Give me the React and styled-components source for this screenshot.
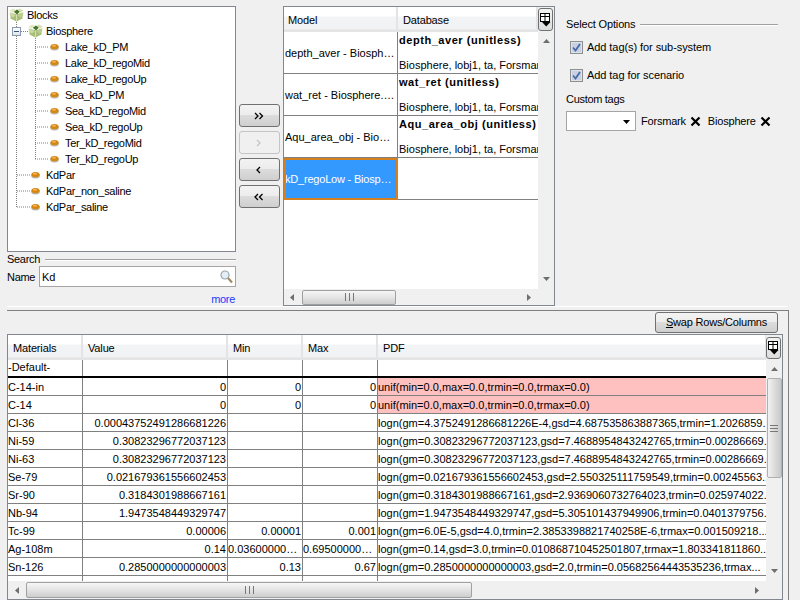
import React from "react";
import styled, { createGlobalStyle } from "styled-components";

const Global = createGlobalStyle`
  html, body { margin: 0; padding: 0; background: #f0f0f0; }
  * { box-sizing: border-box; }
`;

const Page = styled.div`
  width: 800px; height: 600px; overflow: hidden; background: #f0f0f0;
  padding: 6px 0 0 7px;
  font: 11px "Liberation Sans", Arial, sans-serif; color: #000;
`;
const Top = styled.div`display: flex; width: 781px; height: 301px; border-bottom: 1px solid #fff;`;
const LeftCol = styled.div`width: 229px; flex: none; display: flex; flex-direction: column;`;
const Tree = styled.div`
  position: relative; height: 248px; background: #fff; border: 1px solid #828790;
`;
const TreeRow = styled.div`
  height: 16px; display: flex; align-items: center; letter-spacing: -0.3px;
  padding-left: ${p => p.$indent}px; white-space: nowrap;
`;
const TreeIcon = styled.svg`flex: none; margin-right: ${p => p.$gap}px; display: block;`;
const Lines = styled.svg`position: absolute; left: 0; top: 0; pointer-events: none;`;
const MinusBox = styled.span`
  position: absolute; left: 4px; top: 20px; width: 9px; height: 9px;
  border: 1px solid #8a9bb0; background: linear-gradient(#fff, #dfe4ee);
  &::after { content: ""; position: absolute; left: 1px; right: 1px; top: 3px; height: 1px; background: #39547a; }
`;
const TitleRow = styled.div`
  display: flex; align-items: center; gap: ${p => p.$gap}px; height: 13px;
  margin-top: ${p => p.$top}px; width: ${p => p.$w}px; line-height: 13px;
`;
const TitleText = styled.span`letter-spacing: ${p => p.$track}px;`;
const Rule = styled.div`flex: 1; height: 1px; background: #a0a0a0; box-shadow: 0 1px 0 #fff;`;
const NameRow = styled.div`display: flex; align-items: center; height: 21px;`;
const NameLabel = styled.span`width: 32px; flex: none; letter-spacing: -0.3px;`;
const SearchBox = styled.div`
  flex: 1; height: 21px; background: #fff; border: 1px solid #a5a5a5;
  display: flex; align-items: center; justify-content: space-between; padding: 0 2px 0 2px;
`;
const More = styled.div`text-align: right; color: #1a3cff; margin: 5px 1px 0 0; line-height: 14px; letter-spacing: -0.3px;`;

const MoveCol = styled.div`
  width: 41px; margin-left: 3px; padding-top: 98px; flex: none;
  display: flex; flex-direction: column; gap: 4px;
`;
const MoveButton = styled.div`
  height: 23px; border: 1px solid ${p => p.$off ? "#c4c4c4" : "#707070"}; border-radius: 3px;
  background: ${p => p.$off ? "#f0f0f0" : "linear-gradient(#f3f3f3 0, #ececec 48%, #dcdcdc 50%, #cfcfcf 100%)"};
  display: flex; align-items: center; justify-content: center;
`;
const Frame = styled.div`
  position: relative; flex: none; width: ${p => p.$w}px; height: ${p => p.$h}px;
  margin-left: ${p => p.$left}px; border: 1px solid #828790; background: #f0f0f0;
  display: grid; grid-template-columns: 1fr 16px; grid-template-rows: 1fr ${p => p.$bar}px;
  overflow: hidden;
`;
const Body = styled.div`background: #fff; overflow: hidden;`;
const HeadRow = styled.div`
  display: flex; height: 25px;
  background: linear-gradient(#fff 0, #fff 36%, #f3f4f5 40%, #f1f2f3 88%, #e2e2e2 92%, #e6e6e6 100%);
`;
const HeadCell = styled.div`
  width: ${p => p.$w}px; flex: none; padding-left: ${p => p.$pad}px; line-height: 27px;
  border-right: 2px solid #e4e4e6; white-space: nowrap; overflow: hidden; letter-spacing: -0.15px;
`;
const ModelRow = styled.div`display: flex; height: 42px; border-bottom: 1px solid #808080;`;
const ModelCell = styled.div`
  width: 114px; flex: none; padding: 0 2px 0 1px; line-height: 42px;
  border-right: 1px solid #808080; white-space: nowrap; overflow: hidden; text-overflow: ellipsis;
`;
const SelectedCell = styled(ModelCell)`
  height: 42px; line-height: 38px; background: #3399ff; color: #fff; letter-spacing: -0.2px;
  border: 2px solid #d5801f; padding-left: 0; margin-bottom: -1px; text-indent: -1px;
`;
const DbCell = styled.div`
  flex: 1; padding-left: 1px; overflow: hidden; white-space: nowrap; display: flex;
  flex-direction: column; justify-content: space-between;
`;
const DbTitle = styled.div`font-weight: bold; line-height: 15px; padding-top: 1px; letter-spacing: 0.55px;`;
const DbSub = styled.div`line-height: 15px;`;

const VBar = styled.div`position: relative; background: #f0f0f0; display: flex; flex-direction: column; align-items: center; padding: ${p => p.$pad}px 0 8px;`;
const Gap = styled.div`flex: 1;`;
const VThumb = styled.div`
  width: 15px; height: 100px; margin-top: 7px; border: 1px solid #b0b0b0; border-radius: 2px;
  background: linear-gradient(90deg, #f2f2f2, #dcdcdc 50%, #c8c8c8);
  display: flex; align-items: center; justify-content: center;
`;
const HBar = styled.div`display: flex; align-items: center; background: #f0f0f0; padding: 0 7px 0 ${p => p.$left}px;`;
const HThumb = styled.div`
  width: ${p => p.$w}px; height: ${p => p.$h}px; margin-left: ${p => p.$gap}px; border: 1px solid #a0a0a0; border-radius: 2px;
  background: linear-gradient(#f6f6f6, #e4e4e4 50%, #cdcdcd);
  display: flex; align-items: center; justify-content: center;
`;
const Corner = styled.div`background: #f0f0f0;`;
const CornerButton = styled.div`
  position: absolute; right: ${p => p.$r}px; top: ${p => p.$t}px; width: 15px; height: ${p => p.$h}px;
  border: 1px solid #707070; border-radius: 3px; background: linear-gradient(#f3f3f3, #dcdcdc);
  display: flex; align-items: center; justify-content: center;
`;

const Options = styled.div`margin-left: 11px; width: 212px; flex: none; padding-top: 12px;`;
const CheckRow = styled.div`
  display: flex; align-items: center; gap: 4px; height: 14px; margin-left: 4px;
  margin-top: ${p => p.$top}px; letter-spacing: -0.07px;
`;
const CustomLabel = styled.div`line-height: 14px; margin-top: 10px; letter-spacing: -0.3px;`;
const TagRow = styled.div`display: flex; align-items: center; margin-top: 5px; height: 20px;`;
const Combo = styled.div`
  width: 70px; height: 20px; background: #fff; border: 1px solid #a5a5a5;
  display: flex; align-items: center; justify-content: flex-end; padding: 1px 5px 0 0; margin-right: 5px;
`;
const Tag = styled.span`margin-right: ${p => p.$gap}px; letter-spacing: -0.2px;`;
const TagX = styled.svg`display: block; margin-right: ${p => p.$gap}px; flex: none;`;

const Bottom = styled.div`
  margin-top: 3px; width: 782px; height: 300px; border-top: 1px solid #808080;
  border-right: 1px solid #808080; padding-top: 1px;
`;
const SwapRow = styled.div`display: flex; justify-content: flex-end; padding-right: 10px; height: 22px;`;
const SwapButton = styled.div`
  width: 123px; height: 21px; border: 1px solid #707070; border-radius: 3px; text-align: center; line-height: 19px;
  letter-spacing: -0.2px;
  background: linear-gradient(#f3f3f3 0, #ececec 48%, #dcdcdc 50%, #cfcfcf 100%);
`;
const MatRow = styled.div`
  display: flex; height: 18px; background: #fff;
  border-bottom: ${p => p.$strong ? "2px solid #000" : "1px solid #808080"};
`;
const MatCell = styled.div`
  width: ${p => p.$w}px; flex: ${p => p.$grow ? 1 : "none"}; overflow: hidden; white-space: nowrap;
  text-overflow: ${p => p.$clip ? "clip" : "ellipsis"};
  border-right: ${p => p.$grow ? "none" : "1px solid #808080"};
  padding: 0 1px 0 0; line-height: ${p => p.$lead || 18}px; text-align: ${p => p.$right ? "right" : "left"};
  background: ${p => p.$pink ? "#ffc0c0" : "transparent"};
`;

const Cube = () => (
  <TreeIcon $gap={3} width="15" height="14" viewBox="0 0 15 14">
    <path d="M1.5 4.5 7.5 6.5 13.5 4.5 13.5 10.5 7.5 13.5 1.5 10.5Z" fill="#a8bd78" />
    <path d="M7.5 7V13.5" stroke="#d5e0b0" strokeWidth="1" />
    <path d="M4.5 3.5 8 1.5 11 3.5 8 6.5Z" fill="#47752a" />
    <path d="M0.3 2.5 4 0.5 7.2 2 3.5 4.8Z" fill="#e0e9c2" />
    <path d="M14.7 2.5 11 0.5 8.8 1.8 11.8 4.8Z" fill="#d5e0b2" />
    <path d="M0.5 4.5 3.5 5.2 6.5 7.5 3.8 9.5 1 7.5Z" fill="#cbd9a2" />
    <path d="M14.5 4.5 11.5 5.2 8.5 7.5 11.2 9.5 14 7.5Z" fill="#bccd90" />
  </TreeIcon>
);
const Leaf = () => (
  <TreeIcon $gap={6} width="9" height="8" viewBox="0 0 9 8">
    <ellipse cx="4.5" cy="4.6" rx="4.4" ry="3" fill="#b9b3a5" />
    <ellipse cx="4.5" cy="3.6" rx="4" ry="2.6" fill="#d9860f" />
    <ellipse cx="4" cy="2.8" rx="2.2" ry="1" fill="#f0b050" />
  </TreeIcon>
);
const Magnifier = () => (
  <svg width="13" height="14" viewBox="0 0 13 14" style={{ display: "block" }}>
    <circle cx="5" cy="5" r="4" fill="#e4eef5" stroke="#9aa4ad" strokeWidth="1.2" />
    <path d="M8 8 12 12.5" stroke="#a08a60" strokeWidth="2.2" />
  </svg>
);
const Chevrons = ({ dir, n, color }) => {
  const d = (x) => dir === "r" ? `M${x} 1 L${x + 3} 4 L${x} 7` : `M${x + 3} 1 L${x} 4 L${x + 3} 7`;
  const xs = n === 2 ? [1, 5.5] : [3];
  return (
    <svg width="11" height="8" viewBox="0 0 11 8" style={{ display: "block" }}>
      {xs.map((x) => <path key={x} d={d(x)} fill="none" stroke={color} strokeWidth="1.3" />)}
    </svg>
  );
};
const Arrow = ({ dir, color = "#6e6e6e" }) => {
  const pts = { u: "0,4 7,4 3.5,0", d: "0,0 7,0 3.5,4", l: "4,0 4,7 0,3.5", r: "0,0 0,7 4,3.5" }[dir];
  const v = dir === "u" || dir === "d";
  return (
    <svg width={v ? 7 : 4} height={v ? 4 : 7} style={{ display: "block", flex: "none" }}>
      <polygon points={pts} fill={color} />
    </svg>
  );
};
const Grip = ({ v }) => (
  <svg width={v ? 8 : 9} height={v ? 7 : 8} style={{ display: "block" }}>
    {v
      ? [0, 3, 6].map((y) => <rect key={y} x="0" y={y} width="8" height="1" fill="#777" />)
      : [0, 4, 8].map((x) => <rect key={x} x={x} y="0" width="1" height="8" fill="#777" />)}
  </svg>
);
const ColumnIcon = () => (
  <svg width="11" height="14" viewBox="0 0 11 14" style={{ display: "block" }}>
    <rect x="0.5" y="0.5" width="9" height="8" fill="#fff" stroke="#000" />
    <path d="M0.5 3.5H9.5M5 0.5V8.5" stroke="#000" />
    <polygon points="2,9 10.5,9 6.2,13.5" fill="#000" />
  </svg>
);
const Check = () => (
  <svg width="13" height="13" viewBox="0 0 13 13" style={{ display: "block", flex: "none" }}>
    <rect x="0.5" y="0.5" width="12" height="12" fill="#dfe3ec" stroke="#8e8f8f" />
    <rect x="2" y="2" width="9" height="9" fill="#c8d0e2" />
    <path d="M3 6.5 5.5 9.5 10 3" fill="none" stroke="#4a6aa8" strokeWidth="1.8" />
  </svg>
);
const X = ({ gap }) => (
  <TagX $gap={gap} width="11" height="11" viewBox="0 0 11 11">
    <path d="M1.5 1.5 9.5 9.5M9.5 1.5 1.5 9.5" stroke="#000" strokeWidth="2.2" />
  </TagX>
);

const children = ["Lake_kD_PM", "Lake_kD_regoMid", "Lake_kD_regoUp", "Sea_kD_PM", "Sea_kD_regoMid", "Sea_kD_regoUp", "Ter_kD_regoMid", "Ter_kD_regoUp"];
const siblings = ["KdPar", "KdPar_non_saline", "KdPar_saline"];
const dbRows = [
  ["depth_aver - Biosphere.Lake", "depth_aver (unitless)"],
  ["wat_ret - Biosphere.Lake.x", "wat_ret (unitless)"],
  ["Aqu_area_obj - Biosphere.x", "Aqu_area_obj (unitless)"],
];
const mats = [
  ["C-14-in", "0", "0", "0", "unif(min=0.0,max=0.0,trmin=0.0,trmax=0.0)", true],
  ["C-14", "0", "0", "0", "unif(min=0.0,max=0.0,trmin=0.0,trmax=0.0)", true],
  ["Cl-36", "0.00043752491286681226", "", "", "logn(gm=4.3752491286681226E-4,gsd=4.687535863887365,trmin=1.2026859..."],
  ["Ni-59", "0.30823296772037123", "", "", "logn(gm=0.30823296772037123,gsd=7.4688954843242765,trmin=0.00286669..."],
  ["Ni-63", "0.30823296772037123", "", "", "logn(gm=0.30823296772037123,gsd=7.4688954843242765,trmin=0.00286669..."],
  ["Se-79", "0.021679361556602453", "", "", "logn(gm=0.021679361556602453,gsd=2.550325111759549,trmin=0.00245563..."],
  ["Sr-90", "0.3184301988667161", "", "", "logn(gm=0.3184301988667161,gsd=2.9369060732764023,trmin=0.025974022..."],
  ["Nb-94", "1.9473548449329747", "", "", "logn(gm=1.9473548449329747,gsd=5.305101437949906,trmin=0.0401379756..."],
  ["Tc-99", "0.00006", "0.00001", "0.001", "logn(gm=6.0E-5,gsd=4.0,trmin=2.3853398821740258E-6,trmax=0.001509218..."],
  ["Ag-108m", "0.14", "0.03600000000", "0.69500000000", "logn(gm=0.14,gsd=3.0,trmin=0.010868710452501807,trmax=1.803341811860..."],
  ["Sn-126", "0.2850000000000003", "0.13", "0.67", "logn(gm=0.2850000000000003,gsd=2.0,trmin=0.05682564443535236,trmax..."],
  ["I-129", "", "", "", "logn(gm=0.2,gsd=3.0,trmin=0.0155,trmax=2.57)"],
];
const W = [75, 145, 75, 75];

export default function App() {
  return (
    <Page>
      <Global />
      <Top>
        <LeftCol>
          <Tree>
            <Lines width="120" height="210">
              <path d="M8.5 15V200M27.5 31V152" stroke="#808080" strokeDasharray="1 1" fill="none" />
              <path d="M13 24.5H20M27 40H41M27 56H41M27 72H41M27 88H41M27 104H41M27 120H41M27 136H41M27 152H41M9 168H22M9 184H22M9 200H22" stroke="#808080" strokeDasharray="1 1" fill="none" />
            </Lines>
            <TreeRow $indent={1}><Cube />Blocks</TreeRow>
            <TreeRow $indent={20}><Cube />Biosphere</TreeRow>
            {children.map((c) => <TreeRow key={c} $indent={42}><Leaf />{c}</TreeRow>)}
            {siblings.map((c) => <TreeRow key={c} $indent={23}><Leaf />{c}</TreeRow>)}
            <MinusBox />
          </Tree>
          <TitleRow $gap={5} $top={1}><TitleText $track={-0.3}>Search</TitleText><Rule /></TitleRow>
          <NameRow>
            <NameLabel>Name</NameLabel>
            <SearchBox><span>Kd</span><Magnifier /></SearchBox>
          </NameRow>
          <More>more</More>
        </LeftCol>
        <MoveCol>
          <MoveButton><Chevrons dir="r" n={2} color="#000" /></MoveButton>
          <MoveButton $off><Chevrons dir="r" n={1} color="#c4c4c4" /></MoveButton>
          <MoveButton><Chevrons dir="l" n={1} color="#000" /></MoveButton>
          <MoveButton><Chevrons dir="l" n={2} color="#000" /></MoveButton>
        </MoveCol>
        <Frame $w={272} $h={300} $left={3} $bar={16}>
          <Body>
            <HeadRow>
              <HeadCell $w={114} $pad={4}>Model</HeadCell>
              <HeadCell $w={140} $pad={5}>Database</HeadCell>
            </HeadRow>
            {dbRows.map(([m, d]) => (
              <ModelRow key={d}>
                <ModelCell>{m}</ModelCell>
                <DbCell>
                  <DbTitle>{d}</DbTitle>
                  <DbSub>Biosphere, lobj1, ta, Forsmark</DbSub>
                </DbCell>
              </ModelRow>
            ))}
            <ModelRow>
              <SelectedCell>kD_regoLow - Biosphere.x</SelectedCell>
              <DbCell />
            </ModelRow>
          </Body>
          <VBar $pad={32}>
            <Arrow dir="u" /><Gap /><Arrow dir="d" />
          </VBar>
          <HBar $left={6}>
            <Arrow dir="l" />
            <HThumb $w={94} $h={15} $gap={8}><Grip /></HThumb>
            <Gap /><Arrow dir="r" />
          </HBar>
          <Corner />
          <CornerButton $r={1} $t={1} $h={23}><ColumnIcon /></CornerButton>
        </Frame>
        <Options>
          <TitleRow $gap={5} $top={0} $w={212}><TitleText $track={-0.15}>Select Options</TitleText><Rule /></TitleRow>
          <CheckRow $top={9}><Check />Add tag(s) for sub-system</CheckRow>
          <CheckRow $top={14}><Check />Add tag for scenario</CheckRow>
          <CustomLabel>Custom tags</CustomLabel>
          <TagRow>
            <Combo><Arrow dir="d" color="#000" /></Combo>
            <Tag $gap={4}>Forsmark</Tag>
            <X gap={7} />
            <Tag $gap={4}>Biosphere</Tag>
            <X gap={0} />
          </TagRow>
        </Options>
      </Top>
      <Bottom>
        <SwapRow><SwapButton><u>S</u>wap Rows/Columns</SwapButton></SwapRow>
        <Frame $w={776} $h={266} $left={0} $bar={18}>
          <Body>
            <HeadRow>
              <HeadCell $w={W[0]} $pad={5}>Materials</HeadCell>
              <HeadCell $w={W[1]} $pad={5}>Value</HeadCell>
              <HeadCell $w={W[2]} $pad={5}>Min</HeadCell>
              <HeadCell $w={W[3]} $pad={5}>Max</HeadCell>
              <HeadCell $w={389} $pad={5}>PDF</HeadCell>
            </HeadRow>
            <MatRow $strong>
              <MatCell $w={W[0]} $lead={14}>-Default-</MatCell>
              <MatCell $w={W[1]} />
              <MatCell $w={W[2]} />
              <MatCell $w={W[3]} />
              <MatCell $grow />
            </MatRow>
            {mats.map(([n, v, mi, ma, pdf, pink]) => (
              <MatRow key={n}>
                <MatCell $w={W[0]}>{n}</MatCell>
                <MatCell $w={W[1]} $right>{v}</MatCell>
                <MatCell $w={W[2]} $right>{mi}</MatCell>
                <MatCell $w={W[3]} $right>{ma}</MatCell>
                <MatCell $grow $clip $pink={pink}>{pdf}</MatCell>
              </MatRow>
            ))}
          </Body>
          <VBar $pad={32}>
            <Arrow dir="u" />
            <VThumb><Grip v /></VThumb>
            <Gap /><Arrow dir="d" />
          </VBar>
          <HBar $left={7}>
            <Arrow dir="l" />
            <HThumb $w={446} $h={16} $gap={7}><Grip /></HThumb>
            <Gap /><Arrow dir="r" />
          </HBar>
          <Corner />
          <CornerButton $r={1} $t={2} $h={22}><ColumnIcon /></CornerButton>
        </Frame>
      </Bottom>
    </Page>
  );
}
